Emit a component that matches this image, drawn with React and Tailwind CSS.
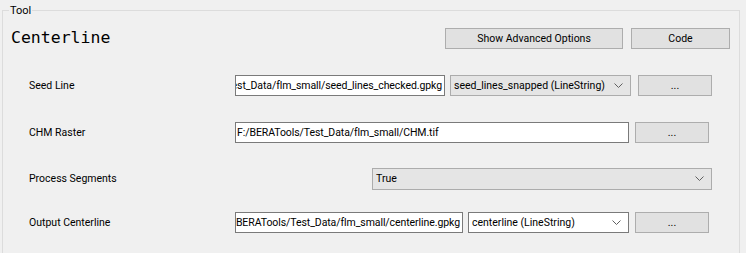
import React from 'react';

const ui = { fontFamily: 'Roboto, "Noto Sans", sans-serif' };

function Chevron() {
  return (
    <svg width="9" height="6" viewBox="0 0 9 6" className="shrink-0">
      <path d="M0.5 0.5 L4.5 4.5 L8.5 0.5" fill="none" stroke="#606060" strokeWidth="1" />
    </svg>
  );
}

function Button({ label, className }) {
  return (
    <div className={`flex items-center justify-center bg-[#e1e1e1] border border-[#adadad] text-[10.5px] text-black ${className}`}>
      {label}
    </div>
  );
}

function PathBox({ value, className, alignEnd }) {
  return (
    <div className={`flex items-center overflow-hidden bg-white border border-[#7a7a7a] text-[10.5px] tracking-[-0.08px] text-black whitespace-nowrap ${alignEnd ? 'justify-end pr-[2px]' : 'pl-[1px]'} ${className}`}>
      <span className="shrink-0">{value}</span>
    </div>
  );
}

function Combo({ value, className, white }) {
  return (
    <div className={`flex items-center justify-between pl-[3px] pr-[7px] border text-[10.5px] text-black whitespace-nowrap ${white ? 'bg-white border-[#7a7a7a]' : 'bg-[#e5e5e5] border-[#acacac]'} ${className}`}>
      <span>{value}</span>
      <Chevron />
    </div>
  );
}

export default function App() {
  return (
    <div className="w-[746px] h-[253px] bg-[#f0f0f0] overflow-hidden pt-[2px] pl-[2px]" style={ui}>
      <fieldset className="w-[738px] h-[300px] border border-[#dcdcdc] border-b-0">
        <legend className="ml-[6px] px-[1px] text-[11px] leading-[17px] text-black">Tool</legend>

        <div className="flex items-center h-[21px] mt-[9px] pl-[8px] pr-[9px]">
          <div className="flex-1 text-[16.5px] text-black" style={{ fontFamily: '"DejaVu Sans Mono", monospace' }}>
            Centerline
          </div>
          <Button label="Show Advanced Options" className="w-[178px] h-[21px]" />
          <Button label="Code" className="w-[99px] h-[21px] ml-[8px]" />
        </div>

        <div className="flex items-center h-[21px] mt-[26px] pl-[26px]">
          <div className="w-[206px] text-[10.5px] text-black">Seed Line</div>
          <PathBox value="F:/BERATools/Test_Data/flm_small/seed_lines_checked.gpkg" alignEnd className="w-[210px] h-[21px]" />
          <Combo value="seed_lines_snapped (LineString)" className="w-[181px] h-[21px] ml-[5px]" />
          <Button label="..." className="w-[74px] h-[21px] ml-[7px]" />
        </div>

        <div className="flex items-center h-[21px] mt-[26px] pl-[26px]">
          <div className="w-[206px] text-[10.5px] text-black">CHM Raster</div>
          <PathBox value="F:/BERATools/Test_Data/flm_small/CHM.tif" className="w-[394px] h-[21px]" />
          <Button label="..." className="w-[74px] h-[21px] ml-[6px]" />
        </div>

        <div className="flex items-center h-[22px] mt-[25px] pl-[26px]">
          <div className="w-[343px] text-[10.5px] text-black">Process Segments</div>
          <Combo value="True" className="w-[340px] h-[22px]" />
        </div>

        <div className="flex items-center h-[21px] mt-[22px] pl-[26px]">
          <div className="w-[206px] text-[10.5px] text-black">Output Centerline</div>
          <PathBox value="F:/BERATools/Test_Data/flm_small/centerline.gpkg" alignEnd className="w-[228px] h-[21px]" />
          <Combo value="centerline (LineString)" white className="w-[161px] h-[21px] ml-[5px]" />
          <Button label="..." className="w-[74px] h-[21px] ml-[6px]" />
        </div>
      </fieldset>
    </div>
  );
}
